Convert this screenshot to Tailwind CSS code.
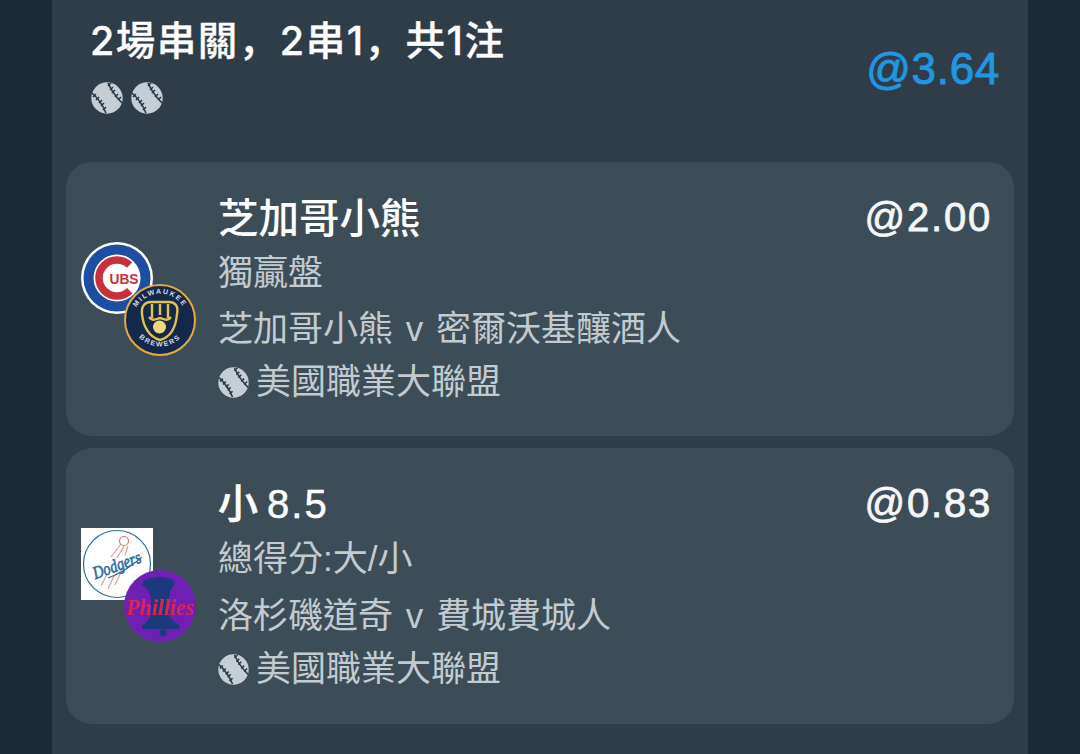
<!DOCTYPE html>
<html lang="zh-Hant">
<head>
  <meta charset="UTF-8" />
  <meta name="viewport" content="width=device-width, initial-scale=1.0" />
  <title>2場串關</title>
  <script src="https://cdn.jsdelivr.net/npm/@tailwindcss/browser@4"></script>
</head>
<body class="h-[754px] w-[1080px] overflow-hidden bg-[#1b2a37] font-['Liberation_Sans','Noto_Sans_CJK_SC',sans-serif]">
  <svg class="hidden">
    <symbol id="ball" viewBox="0 0 32 32">
      <circle cx="16" cy="16" r="15.7" fill="#c5ced5" />
      <g fill="none" stroke="#2c3a46" stroke-width="1.6">
        <path d="M1 11Q10 19 15 31" />
        <path d="M17 1Q22 12 31 21" />
        <path d="M2 15l3-3M5 18l3-3M8 21l3-3M10 24l3-3M12 28l3-3" />
        <path d="M17 4l3-3M19 8l3-3M21 11l3-3M24 15l3-3M27 18l3-3" />
      </g>
    </symbol>
  </svg>

  <main class="mx-[52px] h-[754px] bg-[#2f3d49] px-[14px]">
    <!-- header -->
    <header class="flex h-[162px] items-start justify-between pl-[24px] pr-[14px]">
      <div>
        <h1 lang="zh-Hans" class="mt-[16px] font-['Inter','Noto_Sans_CJK_SC',sans-serif] text-[39.5px] leading-[50px] font-medium tracking-[1.5px] text-white [-webkit-text-stroke:0.3px_white]">2場串關，2串1，共1注</h1>
        <div class="mt-[16px] ml-px flex gap-[8px]">
          <svg class="h-[32px] w-[32px]"><use href="#ball" /></svg>
          <svg class="h-[32px] w-[32px]"><use href="#ball" /></svg>
        </div>
      </div>
      <div class="mt-[43px] text-[44px] leading-[52px] tracking-[0.7px] text-[#2196e3] [-webkit-text-stroke:0.9px_#2196e3]">@3.64</div>
    </header>

    <!-- leg 1 -->
    <section class="flex h-[274px] rounded-[26px] bg-[#3d4d57] pl-[15px] pr-[22px]">
      <div class="relative mt-[80px] h-[115px] w-[137px] shrink-0">
        <svg class="absolute left-0 top-0 h-[72px] w-[72px]" viewBox="0 0 72 72">
          <circle cx="36" cy="36" r="36" fill="#fff" />
          <circle cx="36" cy="36" r="33.5" fill="#1c4fa3" />
          <circle cx="36" cy="36" r="23.5" fill="#fff" />
          <circle cx="36" cy="36" r="18" fill="none" stroke="#c8303a" stroke-width="7.5" stroke-dasharray="84 29" transform="rotate(45 36 36)" />
          <text x="43" y="41.5" text-anchor="middle" font-size="14" font-weight="700" fill="#c8303a" textLength="29" lengthAdjust="spacingAndGlyphs" font-family="Liberation Sans">UBS</text>
        </svg>
        <svg class="absolute left-[43px] top-[42px] h-[72px] w-[72px]" viewBox="0 0 72 72">
          <circle cx="36" cy="36" r="35" fill="#13294b" stroke="#e5a93c" stroke-width="2" />
          <path id="brewers-top" d="M10 44A27 27 0 1 1 62 44" fill="none" />
          <path id="brewers-bottom" d="M9 44A29 29 0 0 0 63 44" fill="none" />
          <text font-size="7" font-weight="700" fill="#d9dde2" letter-spacing="1.6" font-family="Liberation Sans"><textPath href="#brewers-top" startOffset="50%" text-anchor="middle">MILWAUKEE</textPath></text>
          <text font-size="7" font-weight="700" fill="#d9dde2" letter-spacing="1.6" font-family="Liberation Sans"><textPath href="#brewers-bottom" startOffset="50%" text-anchor="middle">BREWERS</textPath></text>
          <path d="M18 30C17 21 22 18 27 18H45C50 18 55 21 53 30 52 42 47 53 36 56 25 53 19 42 18 30Z" fill="none" stroke="#e5c04a" stroke-width="2.4" />
          <path d="M28 20V34M44 20V34M36 20V31M25 33C28 37 30 36 36 34 42 36 44 37 47 33" stroke="#e5c04a" stroke-width="2.4" fill="none" />
          <circle cx="35.5" cy="43" r="6.5" fill="#f1d67a" />
        </svg>
      </div>
      <div class="min-w-0 flex-1 pt-[33px]">
        <div class="flex items-start justify-between">
          <h2 class="text-[40.5px] leading-[48px] font-medium text-white">芝加哥小熊</h2>
          <span class="-mt-px text-[40px] leading-[46px] tracking-[1.8px] text-[#f4f6f7] [-webkit-text-stroke:0.8px_#f4f6f7]">@2.00</span>
        </div>
        <p class="mt-[3px] text-[35px] leading-[54px] text-[#c3cbd0]">獨贏盤</p>
        <p class="mt-[2px] text-[35px] leading-[54px] text-[#c3cbd0] [word-spacing:3px]">芝加哥小熊 v 密爾沃基釀酒人</p>
        <p class="flex items-center text-[35px] leading-[52px] text-[#c3cbd0]">
          <svg class="mr-[7px] h-[31px] w-[31px]"><use href="#ball" /></svg>美國職業大聯盟
        </p>
      </div>
    </section>

    <!-- leg 2 -->
    <section class="mt-[12px] flex h-[276px] rounded-[26px] bg-[#3d4d57] pl-[15px] pr-[22px]">
      <div class="relative mt-[80px] h-[115px] w-[137px] shrink-0">
        <svg class="absolute left-0 top-0 h-[72px] w-[72px] overflow-visible" viewBox="0 0 72 72">
          <rect width="72" height="72" fill="#fff" />
          <circle cx="36" cy="36" r="33.5" fill="none" stroke="#2a6c9c" stroke-width="1.2" />
          <g stroke="#e8998c" stroke-width="1.2">
            <path d="M40 16L30 29M43 18L36 30M47 18L44 27M26 46L20 58M33 48L27 61M39 46L34 57" />
          </g>
          <circle cx="43" cy="13" r="4.5" fill="none" stroke="#e2735f" stroke-width="1.2" />
          <text x="36" y="43" text-anchor="middle" font-size="18" font-style="italic" fill="#2a6c9c" stroke="#2a6c9c" stroke-width="0.6" textLength="50" lengthAdjust="spacingAndGlyphs" transform="rotate(-20 36 38)" font-family="Liberation Serif">Dodgers</text>
          <path d="M27 50Q44 44 61 29" fill="none" stroke="#2a6c9c" stroke-width="1.2" />
        </svg>
        <svg class="absolute left-[43px] top-[42px] h-[72px] w-[72px] overflow-visible" viewBox="0 0 72 72">
          <circle cx="36" cy="36" r="36" fill="#6f20b2" />
          <path d="M18 15Q18 8 36 7 54 8 50 15 46 20 45 28H27Q26 20 18 15Z" fill="#1b3a7d" />
          <path d="M27 28H45V44C47 50 52 53 56 56V59H18V56C22 53 25 50 27 44Z" fill="#1b3a7d" />
          <circle cx="39" cy="63" r="3.5" fill="#1b3a7d" />
          <text x="36" y="45" text-anchor="middle" font-size="24" font-style="italic" font-weight="700" fill="#d5264f" textLength="68" lengthAdjust="spacingAndGlyphs" font-family="Liberation Serif">Phillies</text>
        </svg>
      </div>
      <div class="min-w-0 flex-1 pt-[32px]">
        <div class="flex items-start justify-between">
          <h2 class="text-[40px] leading-[48px] font-medium tracking-[2px] text-white [word-spacing:-6px] [-webkit-text-stroke:0.5px_white]">小 8.5</h2>
          <span class="text-[40px] leading-[46px] tracking-[1.8px] text-[#f4f6f7] [-webkit-text-stroke:0.8px_#f4f6f7]">@0.83</span>
        </div>
        <p class="mt-[4px] text-[35px] leading-[54px] text-[#c3cbd0]">總得分:大/小</p>
        <p class="mt-[3px] text-[35px] leading-[54px] text-[#c3cbd0] [word-spacing:3px]">洛杉磯道奇 v 費城費城人</p>
        <p class="flex items-center text-[35px] leading-[52px] text-[#c3cbd0]">
          <svg class="mr-[7px] h-[31px] w-[31px]"><use href="#ball" /></svg>美國職業大聯盟
        </p>
      </div>
    </section>
  </main>
</body>
</html>
